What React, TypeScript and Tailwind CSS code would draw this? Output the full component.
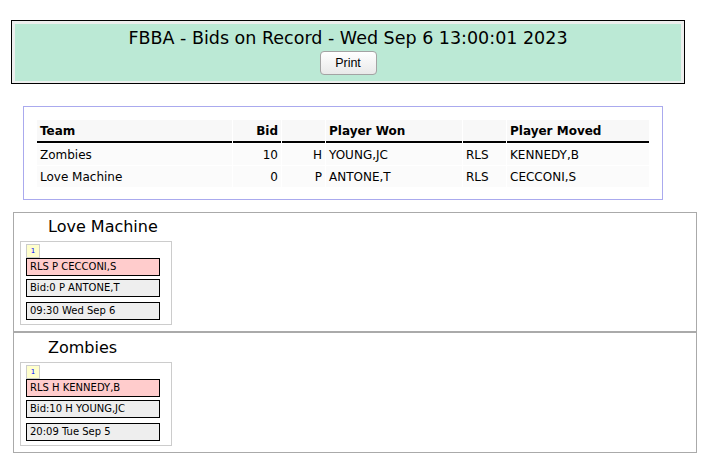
import React from "react";

type Bid = {
  team: string;
  bid: number;
  pos: string;
  won: string;
  action: string;
  moved: string;
};

type Move = {
  team: string;
  moved: string;
  bid: string;
  time: string;
};

const bids: Bid[] = [
  { team: "Zombies", bid: 10, pos: "H", won: "YOUNG,JC", action: "RLS", moved: "KENNEDY,B" },
  { team: "Love Machine", bid: 0, pos: "P", won: "ANTONE,T", action: "RLS", moved: "CECCONI,S" },
];

const moves: Move[] = [
  { team: "Love Machine", moved: "RLS P CECCONI,S", bid: "Bid:0 P ANTONE,T", time: "09:30 Wed Sep 6" },
  { team: "Zombies", moved: "RLS H KENNEDY,B", bid: "Bid:10 H YOUNG,JC", time: "20:09 Tue Sep 5" },
];

const verdana = { fontFamily: '"DejaVu Sans", Verdana, sans-serif' };

const MoveCard = ({ move }: { move: Move }) => (
  <div className="w-[152px] border border-[#cccccc] pt-[2px] pb-[4px] pl-[5px]">
    <div className="flex h-[14px] w-[14px] items-center justify-center border border-[#cccccc] bg-[#ffffcc] text-[7px] leading-none text-[#0000ff]">
      1
    </div>
    <div className="flex h-[18px] w-[134px] items-center border border-black bg-[#ffcccc] pl-[3px] text-[10px] leading-none">
      {move.moved}
    </div>
    <div className="mt-[3px] flex h-[18px] w-[134px] items-center border border-black bg-[#eeeeee] pl-[3px] text-[10px] leading-none">
      {move.bid}
    </div>
    <div className="mt-[5px] flex h-[18px] w-[134px] items-center border border-black bg-[#eeeeee] pl-[3px] text-[10px] leading-none">
      {move.time}
    </div>
  </div>
);

export default function App() {
  return (
    <div className="min-h-[474px] bg-white pt-[20px] text-black" style={verdana}>
      {/* Header */}
      <div className="ml-[11px] w-[674px] border border-black bg-[#eceeed] pt-[3px] pl-[3px] pr-[3px] pb-[2px]">
        <div className="flex h-[57px] flex-col items-center bg-[#bbe9d5] pt-[3px]">
          <div className="text-[17.5px] leading-[22px]">
            FBBA - Bids on Record - Wed Sep 6 13:00:01 2023
          </div>
          <button
            className="mt-[2px] h-[24px] w-[57px] rounded-[4px] border border-[#a3a3a3] bg-gradient-to-b from-white to-[#e9e9e9] text-[12.5px] leading-none"
            style={{ fontFamily: '"Liberation Sans", Arial, sans-serif' }}
          >
            Print
          </button>
        </div>
      </div>

      {/* Bids table */}
      <div className="ml-[23px] mt-[22px] w-[640px] border border-[#aaaaee] pt-[12px] pl-[12px] pr-[11px] pb-[11px]">
        <table className="w-[614px] table-fixed border-separate border-spacing-x-[1px] border-spacing-y-[1px] text-[12px]">
          <colgroup>
            <col className="w-[195px]" />
            <col className="w-[48px]" />
            <col className="w-[43px]" />
            <col className="w-[136px]" />
            <col className="w-[43px]" />
            <col className="w-[142px]" />
          </colgroup>
          <thead>
            <tr className="bg-[#f8f8f8]">
              <th className="h-[23px] border-b-2 border-black px-[3px] text-left font-bold">Team</th>
              <th className="border-b-2 border-black px-[3px] text-right font-bold">Bid</th>
              <th className="border-b-2 border-black px-[3px]"></th>
              <th className="border-b-2 border-black px-[3px] text-left font-bold">Player Won</th>
              <th className="border-b-2 border-black px-[3px]"></th>
              <th className="border-b-2 border-black px-[3px] text-left font-bold">Player Moved</th>
            </tr>
          </thead>
          <tbody>
            {bids.map((b) => (
              <tr key={b.team} className="bg-[#fbfbfb]">
                <td className="h-[21px] px-[3px]">{b.team}</td>
                <td className="px-[3px] text-right">{b.bid}</td>
                <td className="px-[3px] text-right">{b.pos}</td>
                <td className="px-[3px]">{b.won}</td>
                <td className="px-[3px]">{b.action}</td>
                <td className="px-[3px]">{b.moved}</td>
              </tr>
            ))}
          </tbody>
        </table>
      </div>

      {/* Moves by team */}
      <div className="ml-[13px] mt-[12px] w-[684px] border border-[#aaaaaa]">
        {moves.map((m, i) => (
          <div
            key={m.team}
            className={
              i === 0
                ? "border-b-2 border-[#aaaaaa] pl-[6px] pt-[4px] pb-[6px]"
                : "pl-[6px] pt-[5px] pb-[6px]"
            }
          >
            <div className="mb-[4px] pl-[28px] text-[16px] leading-[20px]">{m.team}</div>
            <MoveCard move={m} />
          </div>
        ))}
      </div>
    </div>
  );
}
